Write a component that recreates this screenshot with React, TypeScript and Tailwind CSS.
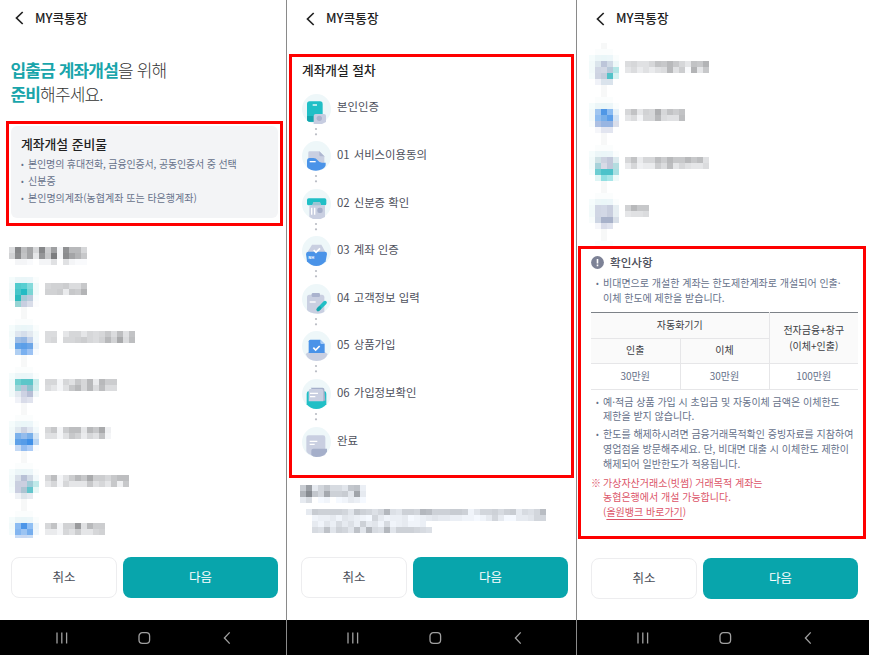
import React from 'react';
import clsx from 'clsx';

const CELL = 6;

// One letter per cell, "a" is nearly white and every next letter is 5 levels darker
const shade = (char: string, cool?: boolean) => {
  const level = 250 - (char.charCodeAt(0) - 97) * 5;
  return cool
    ? `rgb(${level - 5}, ${level - 1}, ${level + 5})`
    : `rgb(${level - 1}, ${level}, ${level + 2})`;
};

interface MaskedTextProps {
  rows: string[];
  cool?: boolean;
  className?: string;
}

const MaskedText: React.FC<MaskedTextProps> = ({ rows, cool, className }) => {
  const cols = Math.max(...rows.map((r) => r.length));
  return (
    <svg
      width={cols * CELL}
      height={rows.length * CELL}
      shapeRendering="crispEdges"
      className={clsx('shrink-0', className)}
    >
      {rows.map((row, y) =>
        row.split('').map((char, x) =>
          char === '.' ? null : (
            <rect key={`${x}-${y}`} x={x * CELL} y={y * CELL} width={CELL} height={CELL} fill={shade(char, cool)} />
          )
        )
      )}
    </svg>
  );
};

interface MaskedStep {
  icon: string[];
  text: string[];
  last?: boolean;
}

const HALO = 'f5fcfc ecf6f8 eaf6f8 ecf6f9 fafdfd';

const MaskedStepRow: React.FC<{ step: MaskedStep }> = ({ step }) => {
  const rows = [HALO, ...step.icon];
  return (
    <div className="flex h-12">
      <svg width={30} height={48} shapeRendering="crispEdges" className="mr-1.5 shrink-0">
        {rows.map((row, y) =>
          row.split(' ').map((color, x) => (
            <rect
              key={`${x}-${y}`}
              x={x * CELL}
              y={y * CELL}
              width={CELL}
              height={step.last && y === 3 ? 3 : CELL}
              fill={`#${color}`}
            />
          ))
        )}
        {!step.last && <rect x={12} y={30} width={6} height={12} fill="#f7f8f8" />}
        {!step.last && <rect x={6} y={42} width={18} height={6} fill="#fbfdfd" />}
      </svg>
      <MaskedText rows={step.text} className="mt-1.5" />
    </div>
  );
};

const prepareSteps: MaskedStep[] = [
  {
    icon: [
      'f2fafa 52cbcd 58cfd2 84dadb effafa',
      'eff9f9 45c6c9 22bbc4 78d5d4 effafa',
      'f2fafa 2cbcbe a4cad6 bccbdd f8fcfd',
      'ffffff 98d4d4 c8cee0 d9dde9 fcfcfd',
    ],
    text: ['hiijggk', 'iijdkjo'],
  },
  {
    icon: [
      'f2fafa dee6ef d5deeb e2e9f0 f2f9fa',
      'f5fcfc a0bfe6 96b8e4 c4d3eb f2f9fc',
      'f5fcfc 62a3e8 5c9fe8 6ca6e8 eaf3fb',
      'ffffff b0cff2 7ab0ef 9cc2f3 f8fbfe',
    ],
    text: ['gg.ehhehghkgmfl', 'gh.hhijhginiqgm'],
  },
  {
    icon: [
      'f0fafa 70d0d0 5cc6c9 5cc6c9 ccecec',
      'f2fafa 9dd6d8 b8c6d8 8bc4cf d2eeee',
      'f2fafa e2e9f0 cdd2e3 b8bfd6 eff6f8',
      'ffffff f0f2f8 d9dce9 e0e3ee ffffff',
    ],
    text: ['hhbhfkhndnjj', 'gebfknhngmgg'],
  },
  {
    icon: [
      'f2fafa dfe8ef cdd3e2 dfe6f0 f2f9fb',
      'f2fafa 7db2eb 94bcec 7ab0ea d5e6f5',
      'effafb 5ea1e8 569ce8 4090e8 b9d5f3',
      'ffffff c5daf5 94bdf1 acccf6 fafcfe',
    ],
    text: ['hkbjmmenkqc', 'ffbfkidhflb'],
  },
  {
    icon: [
      'f2fafa d8dfe9 b8c1d6 d2dbe6 f2f9fb',
      'f2fafa c9cfdf cbcfe0 a0ccd8 bfe9e9',
      'f5fcfc cacee0 adc4d2 62c5cc e6f7f6',
      'ffffff eff2f6 dce4ea e6eaf0 ffffff',
    ],
    text: ['hmbfjnkqjjhkmm', 'ehbheeekfhekck'],
  },
  {
    icon: [
      'f2fafa 8cbcf2 4c96e8 8fbff4 eaf4fa',
      'f5fcfc 84b6f0 9cc4f2 76aeee eef6fc',
      'ffffff c6dbf6 c8d8f2 c9dcf4 ffffff',
    ],
    text: ['hlbiitfnjj', 'ddbhfjeehi'],
    last: true,
  },
];

const noticeSteps: MaskedStep[] = [
  {
    icon: [
      'f2fafa dbe5ec bcc5d9 d0dae6 eef8f8',
      'f2fafa d0d6e4 d2d8e5 b8c9da b4e6e6',
      'f5fcfc ced4e2 c2cddc 52c2c8 d6f2f2',
      'ffffff f0f2f8 dae3ec dae3ec ffffff',
    ],
    text: ['ghffhlknkhelko', 'egdfdfgnfjaoek'],
  },
  {
    icon: [
      'f2fafa a0c6f0 4f97e6 8bbcf2 e8f2f8',
      'f2fafa 8fbdf0 78afe9 5c9fea d2e3f5',
      'f8fcfc adc0e2 98b5e2 98b5e2 dadeea',
      'ffffff f5f6fa e2e5f0 e2e5f0 ffffff',
    ],
    text: ['hleihphljl', 'egbhhngffm'],
  },
  {
    icon: [
      'f2fafa d0e2e6 ccd2e0 c2c8da dceaee',
      'f2fafa a8d2da d8dae6 c0c8da b4dde0',
      'f5fcfc 6ccdd2 4cc2ca 4cc2ca a8dfe2',
      'ffffff def5f5 92dfe2 a8e6e8 effafa',
    ],
    text: ['hldhhmjnkknkmf', 'dhcddjgmehfeeg'],
  },
  {
    icon: [
      'f2fafa d0d6e4 d2d8e6 c8cede e6eef2',
      'f2fafa d0d6e4 d2d8e6 c8cede e6eef2',
      'f8fcfc cdd5e3 a8b2ca a8b2ca d8dfe8',
      'ffffff f5f6fa d9dce9 e0e3ee ffffff',
    ],
    text: ['inkk', 'effg'],
    last: false,
  },
];

const stepIcons: React.ReactNode[] = [
  <>
    <rect x="15" y="22" width="47" height="61" rx="8" fill="#20bfc6" />
    <path d="M15 66H62V75Q62 83 54 83H23Q15 83 15 75Z" fill="#14a5ad" />
    <path d="M32 33H45" stroke="#fff" strokeWidth="4" />
    <path d="M35 66Q35 60 41 60H66Q72 60 72 66V84L60 90H35Z" fill="#c7cde1" />
    <circle cx="52" cy="73" r="8" fill="#aab3ce" />
  </>,
  <>
    <path d="M19 35Q19 31 23 31H52L67 46V80H19Z" fill="#c9cfe1" />
    <path d="M52 31L67 46H56Q52 46 52 42Z" fill="#aeb7d1" />
    <path d="M15 60Q15 51 23 51H34Q42 51 47 58Q51 65 60 65H71V72Q71 78 60 85Q45 92 28 87Q15 82 15 76Z" fill="#4a93e8" />
    <path d="M23 62H41" stroke="#fff" strokeWidth="4" />
  </>,
  <>
    <rect x="15" y="28" width="58" height="21" rx="5" fill="#20bfc6" />
    <path d="M34 40H54L57 49H69V84L56 90H33L22 84V49H31Z" fill="#c9cfe1" />
    <path d="M34 40H54L57 49H31Z" fill="#9cc4d3" />
    <path d="M29 56V77M38 56V77" stroke="#fff" strokeWidth="4" />
    <rect x="46" y="56" width="16" height="16" rx="6" fill="#a5afca" />
  </>,
  <>
    <path d="M30 26H58L62 33L71 50H15L26 33Z" fill="#c9cfe1" />
    <path d="M12 54Q13 47 19 47H69Q75 47 75 54L71 76Q60 90 43 90Q26 90 15 76Z" fill="#4a93e8" />
    <path d="M35 42L42 49L54 37" fill="none" stroke="#fff" strokeWidth="5" />
    <text x="19" y="69" fontSize="12" fontWeight="700" fill="#fff">NH</text>
  </>,
  <>
    <path d="M15 40Q15 32 22 32H60Q67 32 67 40V84Q55 92 35 88Q15 84 15 76Z" fill="#c9cfe1" />
    <rect x="29" y="27" width="25" height="12" rx="4" fill="#aab3ce" />
    <path d="M23 54H41" stroke="#fff" strokeWidth="4" />
    <path d="M50 75L69 56" stroke="#20bfc6" strokeWidth="11" strokeLinecap="round" />
    <path d="M48 77L53 72" stroke="#14a5ad" strokeWidth="10" strokeLinecap="round" />
  </>,
  <>
    <path d="M19 64H69L77 69Q70 90 44 90Q18 90 11 69Z" fill="#c9cfe1" />
    <path d="M20 31Q20 26 25 26H55L68 39V66H20Z" fill="#4a93e8" />
    <path d="M55 26L68 39H59Q55 39 55 35Z" fill="#a8cdf6" />
    <path d="M34 50L41 57L53 45" fill="none" stroke="#fff" strokeWidth="5" />
  </>,
  <>
    <path d="M14 44Q14 37 20 37H67Q73 37 73 44V76Q62 90 43 90Q25 90 14 76Z" fill="#20bfc6" />
    <path d="M26 26H62Q67 26 67 31L70 65H58Z" fill="#a5afca" />
    <path d="M20 36Q20 30 25 30H59Q64 30 64 36V67H20Z" fill="#c9cfe1" />
    <path d="M24 43H48M24 53H40" stroke="#fff" strokeWidth="4" />
  </>,
  <>
    <path d="M13 32Q13 25 20 25H63Q70 25 70 32V84Q55 90 38 88Q13 80 13 72Z" fill="#c9cfe1" />
    <path d="M28 71Q28 65 34 65H75V74Q66 90 43 90Q32 90 28 84Z" fill="#a5afca" />
    <path d="M23 43H46M23 52H38" stroke="#fff" strokeWidth="4" />
  </>,
];

const openingSteps = [
  { label: '본인인증' },
  { no: '01', label: '서비스이용동의' },
  { no: '02', label: '신분증 확인' },
  { no: '03', label: '계좌 인증' },
  { no: '04', label: '고객정보 입력' },
  { no: '05', label: '상품가입' },
  { no: '06', label: '가입정보확인' },
  { label: '완료' },
];

const Header: React.FC<{ className?: string }> = ({ className }) => (
  <div className={clsx('flex items-center', className)}>
    <svg width="9" height="14" viewBox="0 0 9 14" fill="none" stroke="#222" strokeWidth="1.7">
      <path d="M7.7 1L1.5 7L7.7 13" />
    </svg>
    <span className="ml-[11px] text-[12.7px] leading-none font-medium text-[#222]">MY콕통장</span>
  </div>
);

const Footer: React.FC<{ className?: string }> = ({ className }) => (
  <div className={clsx('flex gap-[6px] text-[12.5px]', className)}>
    <button className="h-[41px] w-[106px] rounded-lg border border-[#ededef] text-[#4a4d58]">취소</button>
    <button className="h-[41px] w-[155px] rounded-lg bg-[#08a5ac] text-white">다음</button>
  </div>
);

const NavBar: React.FC<{ className?: string }> = ({ className }) => (
  <div className={clsx('mt-auto flex h-[35px] items-center bg-black', className)}>
    <svg width="286" height="14" className="shrink-0" fill="none" stroke="#a0a0a0" strokeWidth="1.3">
      <path d="M57 1.5V12.5M61.8 1.5V12.5M66.6 1.5V12.5" />
      <rect x="139" y="1.7" width="10.6" height="10.6" rx="3.4" />
      <path d="M229.7 1.4L224.4 7L229.7 12.6" />
    </svg>
  </div>
);

const Bullet: React.FC<{ children: React.ReactNode; className?: string }> = ({ children, className }) => (
  <li className={clsx('flex', className)}>
    <span className="w-[7px] shrink-0 text-[8px]">•</span>
    <span className="whitespace-nowrap">{children}</span>
  </li>
);

const PrepareScreen: React.FC = () => (
  <section className="flex w-[287px] flex-col border-r border-[#8a8a8a]">
    <Header className="h-9 pl-[15px]" />
    <h1 className="mt-[22px] pl-[10.5px] text-[17px] leading-[24px] font-light tracking-[-0.85px] text-[#333]">
      <b className="font-bold text-[#19a5ab]">입출금 계좌개설</b>을 위해
      <br />
      <b className="font-bold text-[#19a5ab]">준비</b>해주세요.
    </h1>

    <div className="mt-[15px] ml-[6px] h-[105px] w-[277px] border-3 border-[#fe0000] p-[2px]">
      <div className="h-[92px] rounded-md bg-[#f3f4f6] pt-[8px] pl-[10px]">
        <h2 className="text-[12.8px] leading-5 font-medium text-[#222]">계좌개설 준비물</h2>
        <ul className="mt-px text-[10px] leading-[17.2px] text-[#66718a]">
          <Bullet className="tracking-[-0.15px]">본인명의 휴대전화, 금융인증서, 공동인증서 중 선택</Bullet>
          <Bullet>신분증</Bullet>
          <Bullet>본인명의계좌(농협계좌 또는 타은행계좌)</Bullet>
        </ul>
      </div>
    </div>

    <div className="mt-[21px] h-[310px] pl-[9px]">
      <MaskedText rows={['gxmrhxjsbvnnh', 'iwlreukzbwrok', '.bba.bbf.fbaa']} />
      <div className="mt-3">
        {prepareSteps.map((step, i) => (
          <MaskedStepRow key={i} step={step} />
        ))}
      </div>
    </div>
    <Footer className="pl-[11px]" />
    <NavBar />
  </section>
);

const ProcedureScreen: React.FC = () => (
  <section className="flex w-[290px] flex-col border-r border-[#8a8a8a]">
    <Header className="h-[37px] pl-[19px]" />
    <div className="mt-[17px] ml-[2px] h-[424px] w-[285px] border-3 border-[#fe0000] pt-[3px] pl-[9px]">
      <h2 className="pl-px text-[12.7px] leading-5 font-medium text-[#222]">계좌개설 절차</h2>
      <ul className="mt-[13.5px]">
        {openingSteps.map((step, i) => (
          <li key={step.label} className="flex h-[47.6px] text-[11.4px] text-[#4d505c]">
            <div className="flex w-[30px] flex-col items-center">
              <svg width="29" height="30" viewBox="0 0 87 90">
                <ellipse cx="43.5" cy="45" rx="43.5" ry="45" fill="#eef7f9" />
                {stepIcons[i]}
              </svg>
              {i < openingSteps.length - 1 && (
                <svg width="4" height="10" className="mt-[3px]" fill="#b9bcc4">
                  <circle cx="2" cy="2" r="1.1" />
                  <circle cx="2" cy="7.3" r="1.1" />
                </svg>
              )}
            </div>
            <div className="ml-[6px] flex h-[27px] items-center gap-[4px]">
              {step.no && <span>{step.no}</span>}
              <span>{step.label}</span>
            </div>
          </li>
        ))}
      </ul>
    </div>
    <div className="mt-[7px] h-[72px] pl-[13px]">
      <MaskedText rows={['jsdhkggeklc', 'owkhqiijerd', 'dg.ab.abdca']} cool />
      <MaskedText
        rows={[
          'djiiiihekihfhnfeiihnmiiijjibehhigijdgfhm',
          '.bccdbedcbahdbccdabcdeddccbbabdhdaaddehh',
          '.dbecgdfcidebgbcdbbc.',
          '.gfleihelengfneiiihgf',
        ]}
        cool
        className="mt-1.5 ml-1.5"
      />
    </div>
    <Footer className="pl-[14px]" />
    <NavBar className="pl-[4px]" />
  </section>
);

const NoticeScreen: React.FC = () => (
  <section className="flex w-[292px] flex-col">
    <Header className="h-[37px] pl-[19px]" />
    <div className="h-[209px] overflow-hidden pt-1.5 pl-3">
      <svg width="30" height="12" className="block" shapeRendering="crispEdges">
        <rect x="12" y="0" width="6" height="6" fill="#f7f8f8" />
        <rect x="6" y="6" width="18" height="6" fill="#fbfdfd" />
      </svg>
      {noticeSteps.map((step, i) => (
        <MaskedStepRow key={i} step={step} />
      ))}
    </div>

    <div className="ml-px h-[293px] w-[288px] border-3 border-[#fe0000] pt-[5px] pl-[10px] text-[10px] leading-[14.8px] text-[#66718a]">
      <h2 className="flex items-center gap-[6px] text-[11.6px] leading-4 font-medium text-[#4d505c]">
        <svg width="13" height="13" viewBox="0 0 13 13">
          <circle cx="6.5" cy="6.5" r="6.4" fill="#7d8296" />
          <path d="M6.5 3V7.4M6.5 8.6V10.2" stroke="#fff" strokeWidth="1.6" />
        </svg>
        확인사항
      </h2>
      <ul className="mt-[6px] pl-[5px]">
        <Bullet>
          비대면으로 개설한 계좌는 한도제한계좌로 개설되어 인출·
          <br />
          이체 한도에 제한을 받습니다.
        </Bullet>
      </ul>
      <table className="mt-[6px] w-[267px] table-fixed border-collapse border-t border-t-[#7d8288] text-center text-[10px]">
        <thead className="bg-[#fafafa] text-[#3c3e45]">
          <tr className="h-[26px]">
            <th colSpan={2} className="border-r border-b border-[#e6e6e8] p-0 font-normal">자동화기기</th>
            <th rowSpan={2} className="border-b border-[#e6e6e8] p-0 leading-4 font-normal">
              전자금융+창구
              <br />
              (이체+인출)
            </th>
          </tr>
          <tr className="h-[25px]">
            <th className="border-r border-b border-[#e6e6e8] p-0 font-normal">인출</th>
            <th className="border-r border-b border-[#e6e6e8] p-0 font-normal">이체</th>
          </tr>
        </thead>
        <tbody>
          <tr className="h-[26px]">
            <td className="border-r border-b border-[#e6e6e8] p-0">30만원</td>
            <td className="border-r border-b border-[#e6e6e8] p-0">30만원</td>
            <td className="border-b border-[#e6e6e8] p-0">100만원</td>
          </tr>
        </tbody>
      </table>
      <ul className="mt-[5px] flex flex-col gap-[3px] pl-[5px]">
        <Bullet>
          예·적금 상품 가입 시 초입금 및 자동이체 금액은 이체한도
          <br />
          제한을 받지 않습니다.
        </Bullet>
        <Bullet>
          한도를 해제하시려면 금융거래목적확인 증빙자료를 지참하여
          <br />
          영업점을 방문해주세요. 단, 비대면 대출 시 이체한도 제한이
          <br />
          해제되어 일반한도가 적용됩니다.
        </Bullet>
      </ul>
      <div className="mt-[4px] flex text-[#dc5468]">
        <span className="w-[12px] shrink-0">※</span>
        <p className="whitespace-nowrap">
          가상자산거래소(빗썸) 거래목적 계좌는
          <br />
          농협은행에서 개설 가능합니다.
          <br />
          (<a className="underline underline-offset-3">올원뱅크 바로가기</a>)
        </p>
      </div>
    </div>
    <Footer className="mt-[19px] pl-[14px]" />
    <NavBar className="pl-[4px]" />
  </section>
);

const App: React.FC = () => {
  return (
    <div
      lang="ko"
      className="flex h-[655px] w-[869px] overflow-hidden bg-white font-['Noto_Sans_CJK_KR',sans-serif]"
    >
      <PrepareScreen />
      <ProcedureScreen />
      <NoticeScreen />
    </div>
  );
};

export default App;
